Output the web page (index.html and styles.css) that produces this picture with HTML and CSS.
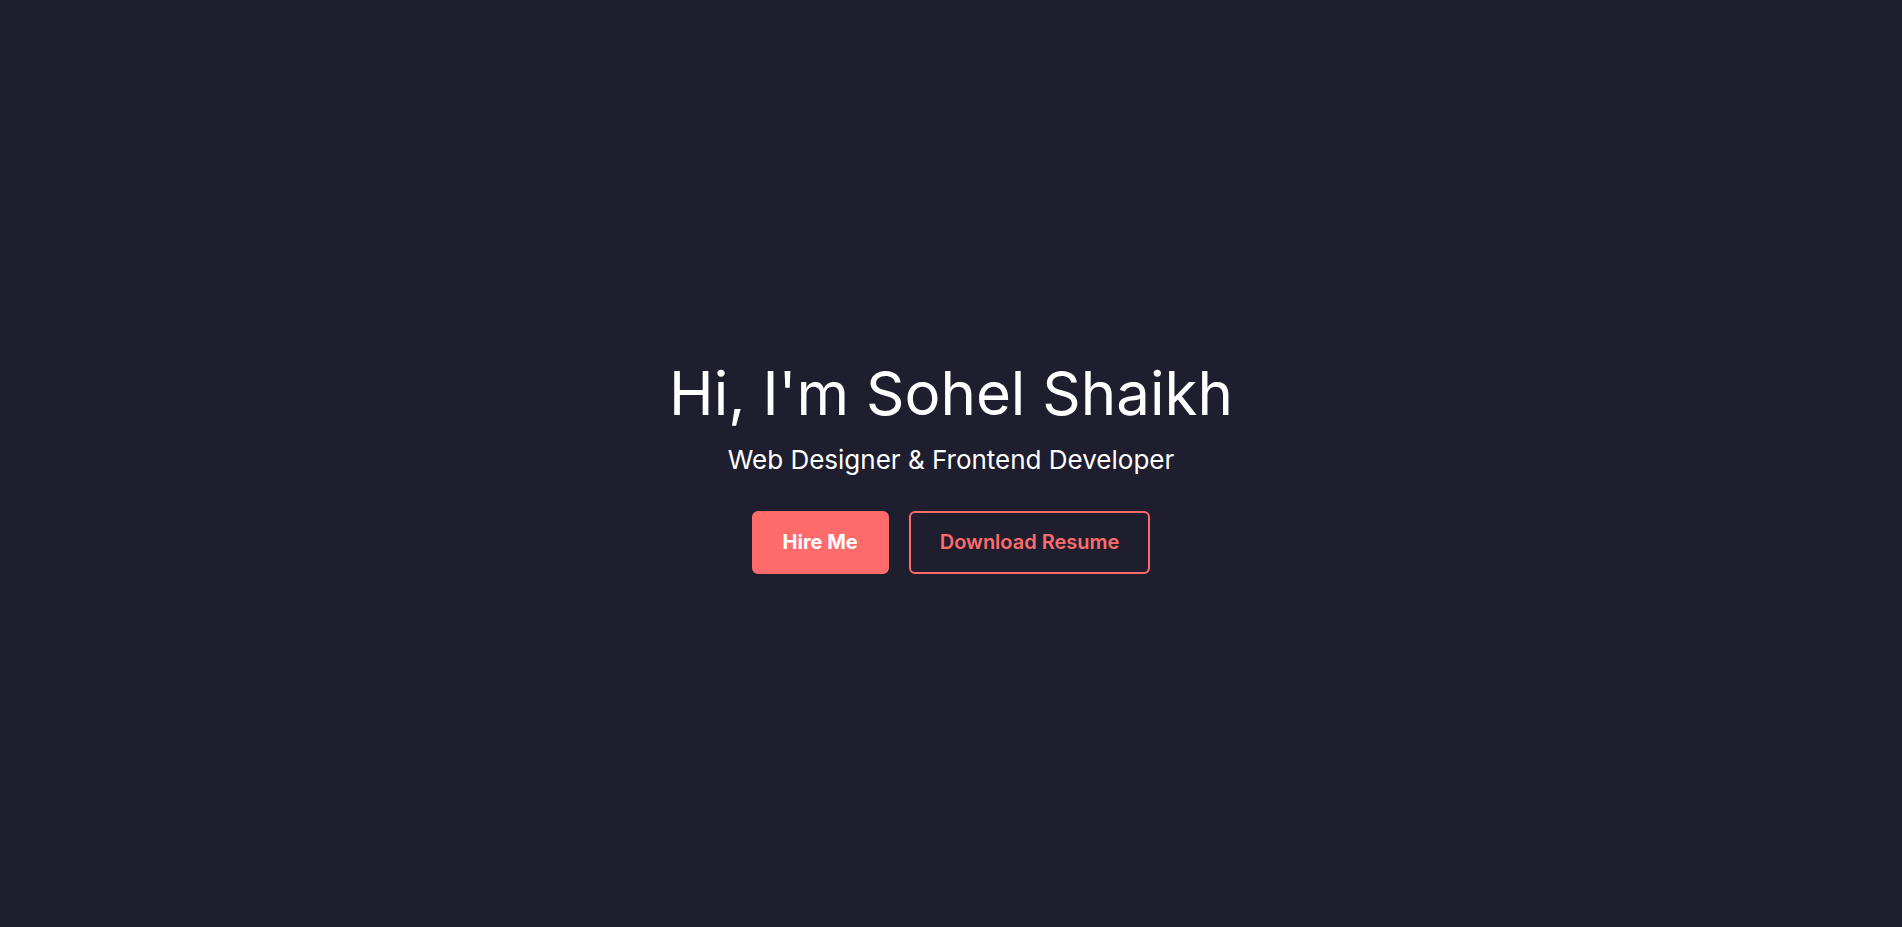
FILE: index.html
```html
<!DOCTYPE html>
<html lang="en">
<head>
<meta charset="utf-8">
<title>Sohel Shaikh</title>
<link rel="stylesheet" href="styles.css">
</head>
<body>
<section class="hero">
  <div class="hero-content">
    <h1 class="hero-title">Hi, I'm Sohel Shaikh</h1>
    <p class="hero-subtitle">Web Designer &amp; Frontend Developer</p>
    <div class="hero-actions">
      <a class="btn btn-primary" href="#contact">Hire Me</a>
      <a class="btn btn-outline" href="#resume">Download Resume</a>
    </div>
  </div>
</section>
<section class="spacer"></section>
</body>
</html>
```
FILE: styles.css
```css
html, body {
  margin: 0;
  padding: 0;
}
body {
  background: #1e1e2e;
  color: #ffffff;
  font-family: Inter, "Noto Sans", sans-serif;
}
::-webkit-scrollbar {
  width: 3px;
}
::-webkit-scrollbar-track {
  background: #f1f1f1;
}
::-webkit-scrollbar-thumb {
  background: #c1c1c1;
}
.hero {
  height: 100vh;
  display: flex;
  align-items: center;
  justify-content: center;
  text-align: center;
}
.hero-title {
  margin: 0 0 6px;
  font-size: 60px;
  font-weight: 400;
  line-height: 1.35;
}
.hero-subtitle {
  margin: 0 0 32px;
  font-size: 26px;
  line-height: 1.5;
}
.hero-actions {
  display: flex;
  justify-content: center;
  gap: 20px;
}
.btn {
  display: inline-block;
  padding: 17px 29px;
  border: 2px solid #ff6b6b;
  border-radius: 6px;
  font-size: 20px;
  font-weight: 600;
  text-decoration: none;
  line-height: 1.25;
}
.btn-primary {
  background: #ff6b6b;
  color: #ffffff;
  font-weight: 700;
}
.btn-outline {
  background: transparent;
  color: #ff6b6b;
}
.spacer {
  height: 2700px;
}
```
